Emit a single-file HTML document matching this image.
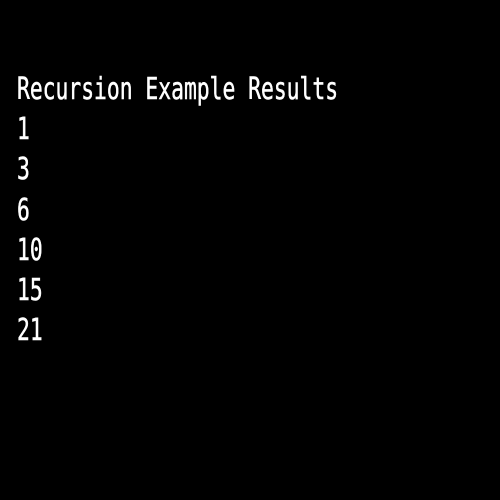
<!DOCTYPE html>
<html><head><style>
html,body{margin:0;padding:0;background:#000;width:500px;height:500px;overflow:hidden}
.t{position:absolute;left:17px;top:70px;color:#fff;font-family:"DejaVu Sans Mono","Liberation Mono",monospace;font-size:30px;line-height:40.2px;transform:scaleX(0.711);transform-origin:0 0;white-space:pre;-webkit-text-stroke:0.5px #fff}
</style></head><body>
<div class="t">Recursion Example Results
1
3
6
10
15
21</div>
</body></html>
